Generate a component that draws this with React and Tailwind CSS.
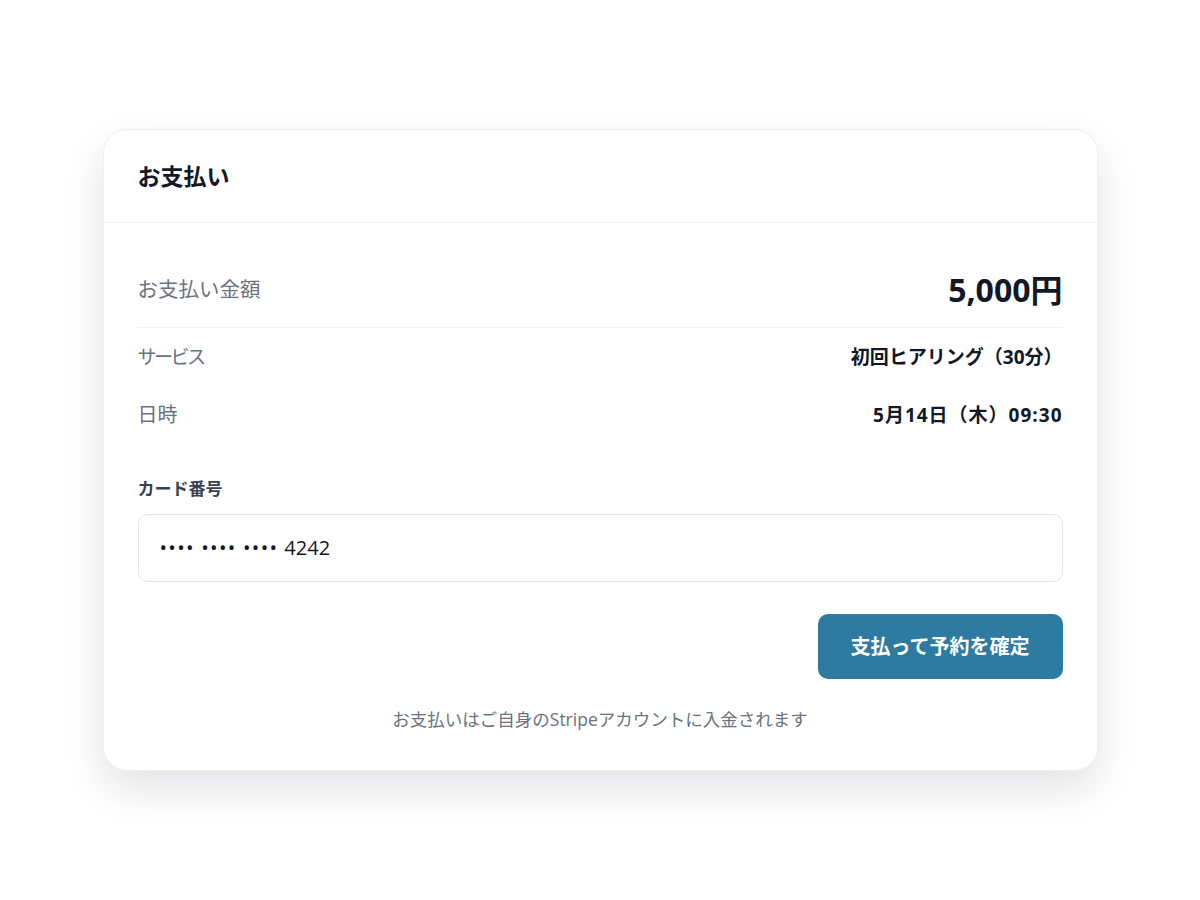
export default function App() {
  const font = { fontFamily: '"Open Sans", "Noto Sans CJK JP", sans-serif' };
  return (
    <div className="min-h-screen w-full bg-white flex items-center justify-center" style={font}>
      <div className="w-[995px] rounded-[24px] bg-white border border-[#eef0f3] shadow-[0_18px_40px_rgba(15,23,42,0.12)]">
        <div className="h-[93px] px-[34px] flex items-center border-b border-[#f0f1f3]">
          <h1 className="text-[23px] font-bold text-[#111827] leading-none">お支払い</h1>
        </div>
        <div className="px-[34px] pt-[29px] pb-[37px]">
          <div className="h-[76px] flex items-center justify-between border-b border-[#f1f2f4]">
            <span className="text-[20.5px] text-[#6b7280]">お支払い金額</span>
            <span className="text-[32px] font-bold text-[#111827]">5,000円</span>
          </div>
          <div className="h-[58px] flex items-center justify-between">
            <span className="text-[19px] tracking-[-2.5px] text-[#6b7280]">サービス</span>
            <span className="text-[19px] font-bold text-[#111827]">初回ヒアリング（30分）</span>
          </div>
          <div className="h-[58px] flex items-center justify-between">
            <span className="text-[20px] text-[#6b7280]">日時</span>
            <span className="text-[19px] tracking-[1px] font-bold text-[#111827]">5月14日（木）09:30</span>
          </div>
          <div className="mt-[33px] text-[17px] leading-[24px] font-bold text-[#374151]">カード番号</div>
          <div className="mt-[13px] h-[68px] rounded-[10px] border border-[#e3e5e8] flex items-center px-[21px] text-[20px] text-[#111827]">
            <span className="tracking-[1.3px]">•••• •••• ••••</span>
            <span className="ml-[6px]">4242</span>
          </div>
          <div className="mt-[32px] flex justify-end">
            <button className="h-[65px] w-[245px] rounded-[10px] bg-[#2e7ba1] text-white text-[20px] font-bold">
              支払って予約を確定
            </button>
          </div>
          <p className="mt-[26px] text-center text-[17.5px] leading-[28px] text-[#6b7280]">
            お支払いはご自身のStripeアカウントに入金されます
          </p>
        </div>
      </div>
    </div>
  );
}
